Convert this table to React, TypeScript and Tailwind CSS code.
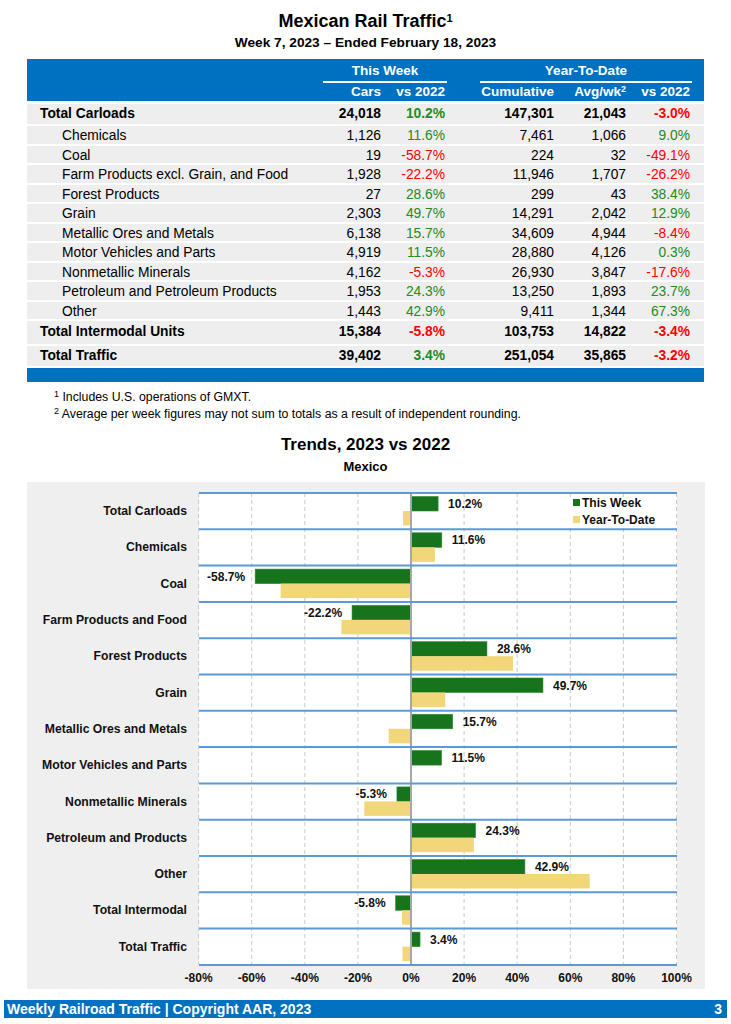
import React from "react";

type Row = {
  label: string;
  cars: string;
  vs: string;
  cum: string;
  avg: string;
  ytd: string;
  h: string;
  total?: boolean;
};

const rows: Row[] = [
  { label: "Total Carloads", cars: "24,018", vs: "10.2%", cum: "147,301", avg: "21,043", ytd: "-3.0%", h: "h-[20px]", total: true },
  { label: "Chemicals", cars: "1,126", vs: "11.6%", cum: "7,461", avg: "1,066", ytd: "9.0%", h: "h-[17.5px]" },
  { label: "Coal", cars: "19", vs: "-58.7%", cum: "224", avg: "32", ytd: "-49.1%", h: "h-[17.5px]" },
  { label: "Farm Products excl. Grain, and Food", cars: "1,928", vs: "-22.2%", cum: "11,946", avg: "1,707", ytd: "-26.2%", h: "h-[17.5px]" },
  { label: "Forest Products", cars: "27", vs: "28.6%", cum: "299", avg: "43", ytd: "38.4%", h: "h-[17.5px]" },
  { label: "Grain", cars: "2,303", vs: "49.7%", cum: "14,291", avg: "2,042", ytd: "12.9%", h: "h-[17.5px]" },
  { label: "Metallic Ores and Metals", cars: "6,138", vs: "15.7%", cum: "34,609", avg: "4,944", ytd: "-8.4%", h: "h-[17.5px]" },
  { label: "Motor Vehicles and Parts", cars: "4,919", vs: "11.5%", cum: "28,880", avg: "4,126", ytd: "0.3%", h: "h-[17.5px]" },
  { label: "Nonmetallic Minerals", cars: "4,162", vs: "-5.3%", cum: "26,930", avg: "3,847", ytd: "-17.6%", h: "h-[17.5px]" },
  { label: "Petroleum and Petroleum Products", cars: "1,953", vs: "24.3%", cum: "13,250", avg: "1,893", ytd: "23.7%", h: "h-[17.5px]" },
  { label: "Other", cars: "1,443", vs: "42.9%", cum: "9,411", avg: "1,344", ytd: "67.3%", h: "h-[17.5px]" },
  { label: "Total Intermodal Units", cars: "15,384", vs: "-5.8%", cum: "103,753", avg: "14,822", ytd: "-3.4%", h: "h-[23px]", total: true },
  { label: "Total Traffic", cars: "39,402", vs: "3.4%", cum: "251,054", avg: "35,865", ytd: "-3.2%", h: "h-[20px]", total: true },
];

const trends: [string, number, number][] = [
  ["Total Carloads", 10.2, -3.0],
  ["Chemicals", 11.6, 9.0],
  ["Coal", -58.7, -49.1],
  ["Farm Products and Food", -22.2, -26.2],
  ["Forest Products", 28.6, 38.4],
  ["Grain", 49.7, 12.9],
  ["Metallic Ores and Metals", 15.7, -8.4],
  ["Motor Vehicles and Parts", 11.5, 0.3],
  ["Nonmetallic Minerals", -5.3, -17.6],
  ["Petroleum and Products", 24.3, 23.7],
  ["Other", 42.9, 67.3],
  ["Total Intermodal", -5.8, -3.4],
  ["Total Traffic", 3.4, -3.2],
];

const pctColor = (v: string) => (v.startsWith("-") ? "text-[#ff0000]" : "text-[#228b22]");

const ROW_H = 36.3;
const ZERO = 212;
const PX = 2.655;

function TrendChart() {
  const ticks = [-80, -60, -40, -20, 0, 20, 40, 60, 80, 100];
  const plotH = ROW_H * trends.length;
  return (
    <svg width="506" height="497" className="block overflow-visible" fontFamily="'Liberation Sans', Arial, sans-serif">
      <rect x="0" y="1" width="478" height={plotH} fill="#ffffff" />
      {ticks
        .filter((t) => t !== 0)
        .map((t) => (
          <line key={t} x1={ZERO + t * PX} x2={ZERO + t * PX} y1="1" y2={plotH + 1} stroke="#c9c9c9" strokeWidth="1" strokeDasharray="4 3" />
        ))}
      <rect x="368" y="5" width="106" height="30" fill="#ffffff" />
      {trends.map(([name, wk, ytd], i) => {
        const top = 1 + i * ROW_H;
        const wx = wk >= 0 ? ZERO : ZERO + wk * PX;
        const yx = ytd >= 0 ? ZERO : ZERO + ytd * PX;
        const lx = wk >= 0 ? ZERO + wk * PX + 10 : ZERO + wk * PX - 10;
        return (
          <g key={name}>
            <rect x={wx} y={top + 3.5} width={Math.abs(wk) * PX} height="14.5" fill="#17731c" stroke="#2a8a2e" strokeWidth="0.6" />
            <rect x={yx} y={top + 18} width={Math.abs(ytd) * PX} height="14.5" fill="#f2d77a" />
            <text x={lx} y={top + 15} fontSize="12" fontWeight="700" fill="#111" textAnchor={wk >= 0 ? "start" : "end"}>
              {wk.toFixed(1)}%
            </text>
          </g>
        );
      })}
      <line x1={ZERO} x2={ZERO} y1="1" y2={plotH + 1} stroke="#a6a6a6" strokeWidth="2" />
      {trends.map((_, i) => (
        <line key={i} x1="0" x2="478" y1={1 + i * ROW_H} y2={1 + i * ROW_H} stroke="#5b9bd5" strokeWidth="2" />
      ))}
      <line x1="0" x2="478" y1={1 + plotH} y2={1 + plotH} stroke="#5b9bd5" strokeWidth="2" />
      <rect x="374" y="7" width="7" height="7" fill="#17731c" />
      <text x="383" y="15" fontSize="12" fontWeight="700" fill="#111">This Week</text>
      <rect x="374" y="24" width="7" height="7" fill="#f2d77a" />
      <text x="383" y="32" fontSize="12" fontWeight="700" fill="#111">Year-To-Date</text>
      {ticks.map((t) => (
        <text key={t} x={ZERO + t * PX} y="490" fontSize="12" fontWeight="700" fill="#111" textAnchor="middle">
          {t}%
        </text>
      ))}
    </svg>
  );
}

export default function App() {
  return (
    <div className="w-[731px] h-[1024px] bg-white text-black font-['Liberation_Sans',Arial,sans-serif]">
      <div className="pt-[10px] text-center font-bold">
        <div className="text-[18px] leading-[22px]">
          Mexican Rail Traffic<sup className="text-[11px]">1</sup>
        </div>
        <div className="mt-[3px] text-[13.7px] leading-[16px]">Week 7, 2023 – Ended February 18, 2023</div>
      </div>

      <div className="mx-[27px] mt-[8px]">
        <div className="h-[42px] bg-[#0070c0] px-[13px] text-[13.5px] font-bold text-white">
          <div className="grid grid-cols-[281px_60px_64px_109px_72px_64px] pt-[2px]">
            <div />
            <div className="col-span-2 ml-[2px] mr-[-2px] border-b-2 border-white text-center leading-[20px]">This Week</div>
            <div className="col-span-3 ml-[35px] mr-[-2px] border-b-2 border-white text-center leading-[20px]">Year-To-Date</div>
          </div>
          <div className="grid h-[18px] grid-cols-[281px_60px_64px_109px_72px_64px] items-center text-right leading-[18px]">
            <div />
            <div>Cars</div>
            <div>vs 2022</div>
            <div>Cumulative</div>
            <div>
              Avg/wk<sup className="text-[9px]">2</sup>
            </div>
            <div>vs 2022</div>
          </div>
        </div>

        <div className="mt-[3px] flex flex-col gap-[2px] text-[13.8px]">
          {rows.map((r) => (
            <div
              key={r.label}
              className={`grid grid-cols-[281px_60px_64px_109px_72px_64px] items-center bg-[#eeeeee] px-[13px] text-right ${r.h} ${
                r.total ? "font-bold" : ""
              }`}
            >
              <div className={r.total ? "text-left whitespace-nowrap" : "pl-[22px] text-left whitespace-nowrap"}>{r.label}</div>
              <div>{r.cars}</div>
              <div className={pctColor(r.vs)}>{r.vs}</div>
              <div>{r.cum}</div>
              <div>{r.avg}</div>
              <div className={pctColor(r.ytd)}>{r.ytd}</div>
            </div>
          ))}
        </div>
        <div className="mt-[2px] h-[14px] bg-[#0070c0]" />
      </div>

      <div className="mt-[7px] pl-[54px] text-[12.3px] leading-[17px]">
        <div>
          <sup className="text-[9px]">1</sup> Includes U.S. operations of GMXT.
        </div>
        <div>
          <sup className="text-[9px]">2</sup> Average per week figures may not sum to totals as a result of independent rounding.
        </div>
      </div>

      <div className="mt-[12px] text-center font-bold">
        <div className="text-[17px] leading-[20px]">Trends, 2023 vs 2022</div>
        <div className="mt-[4px] text-[13px] leading-[16px]">Mexico</div>
      </div>

      <div className="mx-[27px] mt-[7px] flex h-[507px] w-[678px] bg-[#efefef] pt-[10px]">
        <div className="flex w-[160px] flex-col pt-[1px]">
          {trends.map(([name]) => (
            <div key={name} className="flex h-[36.3px] items-center justify-end whitespace-nowrap text-[12.2px] font-bold leading-[14px] text-[#111]">
              {name}
            </div>
          ))}
        </div>
        <div className="ml-[12px]">
          <TrendChart />
        </div>
      </div>

      <div className="mx-[4px] mt-[11px] flex h-[18px] items-center justify-between bg-[#0070c0] px-[3px] text-[14px] font-bold leading-[18px] text-white">
        <span>Weekly Railroad Traffic | Copyright AAR, 2023</span>
        <span className="pr-[2px]">3</span>
      </div>
    </div>
  );
}
